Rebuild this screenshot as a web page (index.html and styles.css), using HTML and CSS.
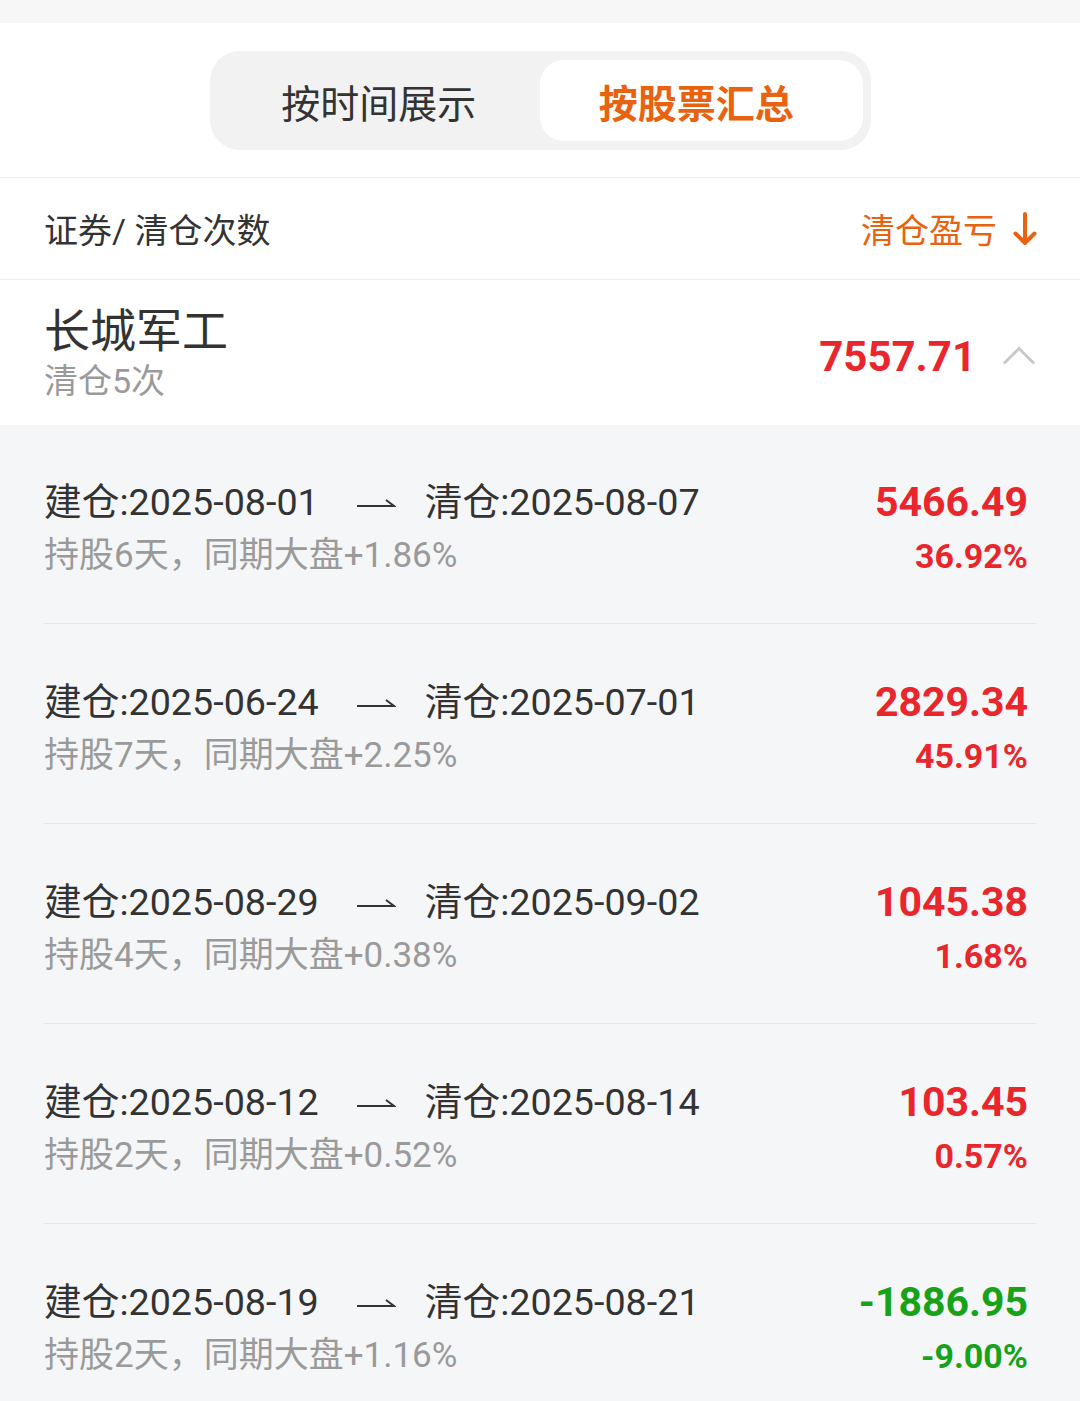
FILE: index.html
```html
<!DOCTYPE html>
<html lang="zh-CN">
<head>
  <meta charset="UTF-8">
  <meta name="viewport" content="width=device-width, initial-scale=1">
  <title>清仓记录</title>
  <link rel="stylesheet" href="styles.css">
</head>
<body>
  <div class="page">

    <!-- Top strip -->
    <div class="top-strip"></div>

    <!-- Segmented switch -->
    <div class="switch-bar">
      <div class="switch">
        <div class="switch-item">按时间展示</div>
        <div class="switch-item active">按股票汇总</div>
      </div>
    </div>

    <!-- Column header -->
    <div class="list-head">
      <div class="head-left">证券/ 清仓次数</div>
      <div class="head-right">
        清仓盈亏
        <svg class="sort-icon" viewBox="0 0 24 34" xmlns="http://www.w3.org/2000/svg">
          <path d="M12 2v29M2.5 21.5l9.5 9.5 9.5-9.5"/>
        </svg>
      </div>
    </div>

    <!-- Stock summary -->
    <div class="stock-row">
      <div class="stock-info">
        <div class="stock-name">长城军工</div>
        <div class="stock-sub">清仓5次</div>
      </div>
      <div class="stock-total">
        <span class="total-value up">7557.71</span>
        <svg class="fold-icon" viewBox="0 0 36 22" xmlns="http://www.w3.org/2000/svg">
          <path d="M2 20L18 4l16 16"/>
        </svg>
      </div>
    </div>

    <!-- Trades -->
    <div class="trades">
      <div class="trade">
        <div class="trade-left">
          <div class="trade-dates">
            <span>建仓:2025-08-01</span>
            <svg class="harpoon" viewBox="0 0 40 14" xmlns="http://www.w3.org/2000/svg"><path d="M1 11h37l-8-6"/></svg>
            <span>清仓:2025-08-07</span>
          </div>
          <div class="trade-sub">持股6天，同期大盘+1.86%</div>
        </div>
        <div class="trade-right up">
          <div class="trade-amount">5466.49</div>
          <div class="trade-rate">36.92%</div>
        </div>
      </div>

      <div class="trade">
        <div class="trade-left">
          <div class="trade-dates">
            <span>建仓:2025-06-24</span>
            <svg class="harpoon" viewBox="0 0 40 14" xmlns="http://www.w3.org/2000/svg"><path d="M1 11h37l-8-6"/></svg>
            <span>清仓:2025-07-01</span>
          </div>
          <div class="trade-sub">持股7天，同期大盘+2.25%</div>
        </div>
        <div class="trade-right up">
          <div class="trade-amount">2829.34</div>
          <div class="trade-rate">45.91%</div>
        </div>
      </div>

      <div class="trade">
        <div class="trade-left">
          <div class="trade-dates">
            <span>建仓:2025-08-29</span>
            <svg class="harpoon" viewBox="0 0 40 14" xmlns="http://www.w3.org/2000/svg"><path d="M1 11h37l-8-6"/></svg>
            <span>清仓:2025-09-02</span>
          </div>
          <div class="trade-sub">持股4天，同期大盘+0.38%</div>
        </div>
        <div class="trade-right up">
          <div class="trade-amount">1045.38</div>
          <div class="trade-rate">1.68%</div>
        </div>
      </div>

      <div class="trade">
        <div class="trade-left">
          <div class="trade-dates">
            <span>建仓:2025-08-12</span>
            <svg class="harpoon" viewBox="0 0 40 14" xmlns="http://www.w3.org/2000/svg"><path d="M1 11h37l-8-6"/></svg>
            <span>清仓:2025-08-14</span>
          </div>
          <div class="trade-sub">持股2天，同期大盘+0.52%</div>
        </div>
        <div class="trade-right up">
          <div class="trade-amount">103.45</div>
          <div class="trade-rate">0.57%</div>
        </div>
      </div>

      <div class="trade">
        <div class="trade-left">
          <div class="trade-dates">
            <span>建仓:2025-08-19</span>
            <svg class="harpoon" viewBox="0 0 40 14" xmlns="http://www.w3.org/2000/svg"><path d="M1 11h37l-8-6"/></svg>
            <span>清仓:2025-08-21</span>
          </div>
          <div class="trade-sub">持股2天，同期大盘+1.16%</div>
        </div>
        <div class="trade-right down">
          <div class="trade-amount">-1886.95</div>
          <div class="trade-rate">-9.00%</div>
        </div>
      </div>
    </div>
  </div>
</body>
</html>
```

FILE: styles.css
```css
/* === Palette === */
:root {
  --text-main: #333333;
  --text-muted: #9a9a9a;
  --orange: #e8620f;
  --red: #e8262b;
  --green: #17a21a;
  --line: #ececec;
  --row-bg: #f5f6f8;
  --font: Roboto, "Noto Sans CJK SC", sans-serif;
}

* {
  box-sizing: border-box;
  margin: 0;
  padding: 0;
}
html, body {
  width: 100%;
  height: 100%;
  background: #fff;
  font-family: var(--font);
  color: var(--text-main);
  overflow: hidden;
}

.top-strip {
  height: 23px;
  background: #f7f7f7;
}

/* === Segmented switch === */
.switch-bar {
  display: flex;
  justify-content: center;
  padding: 28px 0 27px;
  border-bottom: 1px solid var(--line);
}
.switch {
  width: 661px;
  display: grid;
  grid-template-columns: 1fr 1fr;
  padding: 9px 8px;
  background: #f2f2f2;
  border-radius: 30px;
}
.switch-item {
  height: 81px;
  display: flex;
  align-items: center;
  justify-content: center;
  font-size: 39px;
  color: #333;
}
.switch-item.active {
  background: #fff;
  border-radius: 24px;
  color: var(--orange);
  font-weight: 700;
  padding-right: 10px;
}

/* === Column header === */
.list-head {
  display: flex;
  align-items: center;
  justify-content: space-between;
  height: 102px;
  padding: 0 43px 0 44px;
  border-bottom: 1px solid var(--line);
  font-size: 34px;
}
.head-right {
  display: flex;
  align-items: center;
  gap: 16px;
  color: var(--orange);
}
.sort-icon {
  width: 24px;
  height: 34px;
  fill: none;
  stroke: var(--orange);
  stroke-width: 4;
  stroke-linecap: round;
  stroke-linejoin: round;
}

/* === Stock summary === */
.stock-row {
  display: flex;
  align-items: center;
  justify-content: space-between;
  height: 145px;
  padding: 0 44px;
}
.stock-name {
  font-size: 46px;
  line-height: 56px;
}
.stock-sub {
  font-size: 34px;
  line-height: 44px;
  color: var(--text-muted);
}
.stock-total {
  display: flex;
  align-items: center;
  gap: 26px;
  margin-top: 8px;
}
.total-value {
  font-size: 42px;
  font-weight: 700;
}
.fold-icon {
  width: 34px;
  height: 22px;
  fill: none;
  stroke: #c8c8c8;
  stroke-width: 3;
  margin-bottom: 4px;
}

.up { color: var(--red); }
.down { color: var(--green); }

/* === Trades === */
.trades {
  background: var(--row-bg);
  padding: 0 44px;
}
.trade {
  display: flex;
  align-items: center;
  justify-content: space-between;
  height: 200px;
  padding-top: 12px;
  border-bottom: 1px solid #e6e7e9;
}
.trade:first-child {
  height: 199px;
}
.trade-dates {
  display: flex;
  align-items: center;
  font-size: 37.7px;
  line-height: 52px;
  color: var(--text-main);
}
.harpoon {
  width: 40px;
  height: 14px;
  margin: 0 29px 0 37px;
  fill: none;
  stroke: #333;
  stroke-width: 2;
}
.trade-sub {
  font-size: 35px;
  line-height: 56px;
  color: var(--text-muted);
}
.trade-right {
  text-align: right;
  font-weight: 700;
  margin-right: 8px;
}
.trade-amount {
  font-size: 41px;
  line-height: 52px;
}
.trade-rate {
  font-size: 34px;
  line-height: 56px;
}
```
